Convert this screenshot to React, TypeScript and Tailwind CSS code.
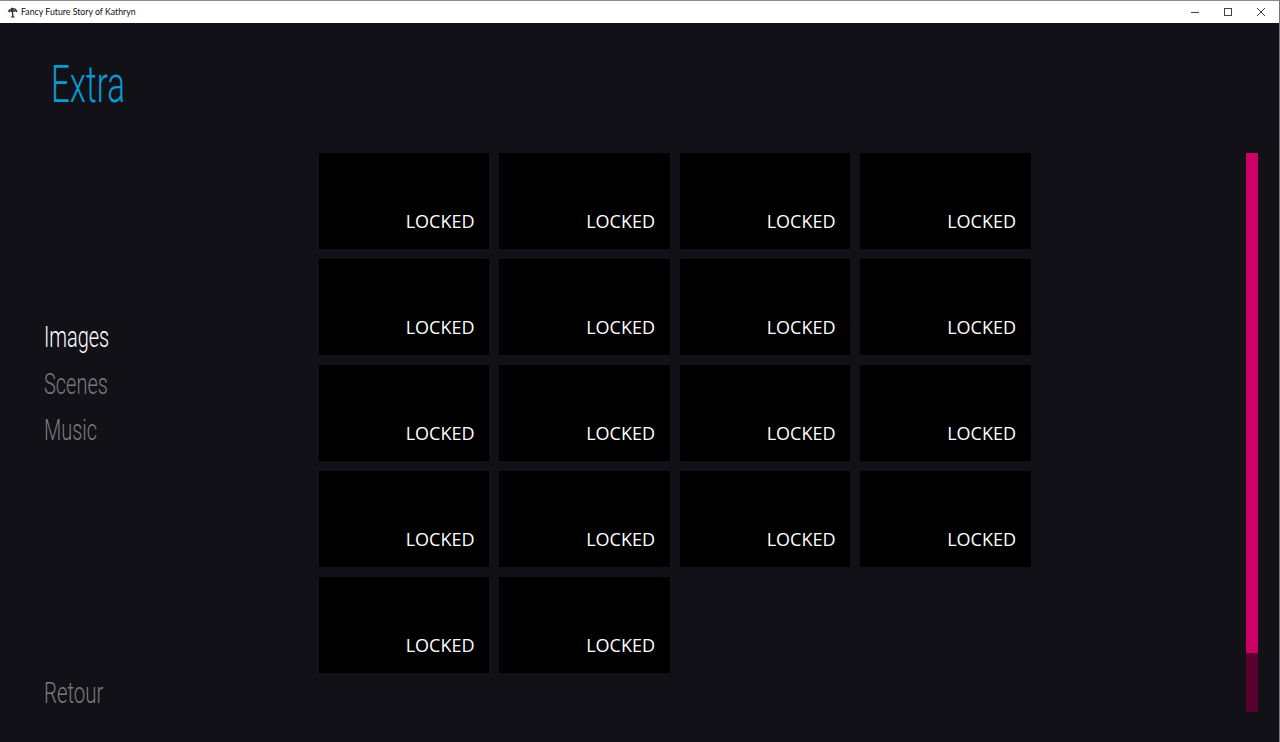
import React from 'react';

const cells = Array.from({ length: 18 }, (_, i) => i);

const navItems = ['Images', 'Scenes', 'Music'];

const TitleBar = () => (
  <div className="flex h-[23px] items-center border-t border-t-[#8a8a8a] bg-white pl-[7px]">
    <svg width="11" height="11" viewBox="0 0 11 11" className="shrink-0">
      <path d="M0.5 5 L2 2.5 L4 1.5 L4.5 0.5 L6 1 L8.5 1.5 L10.5 4 L10 5.5 L8.5 4.2 L7.5 5 L6.5 4.2 L6.2 6 L6.5 9 L8 10.5 L3.5 10.5 L5 9 L5 5.5 L3.5 4.5 L2.5 5.5 L1.5 4.5 Z" fill="#333" />
      <path d="M3 3 L4 3 M6.5 2.5 L8 3" stroke="#fff" strokeWidth="0.6" />
    </svg>
    <span className="ml-[3px] font-['Lato',sans-serif] text-[8.75px] leading-none text-[#111]">
      Fancy Future Story of Kathryn
    </span>
    <div className="ml-auto flex items-center gap-x-[25px] pr-[14px]">
      <div className="h-px w-[8px] bg-[#444]" />
      <div className="h-[8px] w-[8px] border border-[#444]" />
      <svg width="8" height="8" viewBox="0 0 8 8">
        <path d="M0 0 L8 8 M8 0 L0 8" stroke="#444" strokeWidth="1" fill="none" />
      </svg>
    </div>
  </div>
);

const Cell = () => (
  <div className="flex h-[96px] items-end justify-end bg-black pb-[16px] pr-[14.5px]">
    <span className="font-['Open_Sans',sans-serif] text-[18px] leading-[24px] text-white">LOCKED</span>
  </div>
);

export default function App() {
  return (
    <div className="flex h-[742px] w-[1280px] flex-col overflow-hidden border-r border-r-[#777] bg-[#121118]">
      <TitleBar />
      <div className="flex min-h-0 flex-1">
        <div className="flex w-[318.5px] shrink-0 flex-col pb-[26px] pl-[44px] font-['Roboto',sans-serif] font-light">
          <div className="ml-[6.5px] mt-[29px] origin-left scale-x-[0.637] text-[52px] leading-[66px] text-[#0b9ad0]">
            Extra
          </div>
          <div className="mt-[196px] flex flex-col text-[30px] leading-[46.5px] text-[#79797c]">
            {navItems.map((item, i) => (
              <div key={item} className={i === 0 ? 'origin-left scale-x-[0.665] text-white' : 'origin-left scale-x-[0.665]'}>
                {item}
              </div>
            ))}
          </div>
          <div className="mt-auto origin-left scale-x-[0.68] text-[30px] leading-[46.5px] text-[#79797c]">Retour</div>
        </div>
        <div className="mt-[130px] grid h-fit w-[712px] shrink-0 grid-cols-4 gap-x-[10px] gap-y-[10px]">
          {cells.map((c) => (
            <Cell key={c} />
          ))}
        </div>
        <div className="ml-[215.5px] mt-[130px] flex h-[559px] w-[12px] shrink-0 flex-col">
          <div className="h-[500px] bg-[#ce0067]" />
          <div className="flex-1 bg-[#5a0030]" />
        </div>
      </div>
    </div>
  );
}
